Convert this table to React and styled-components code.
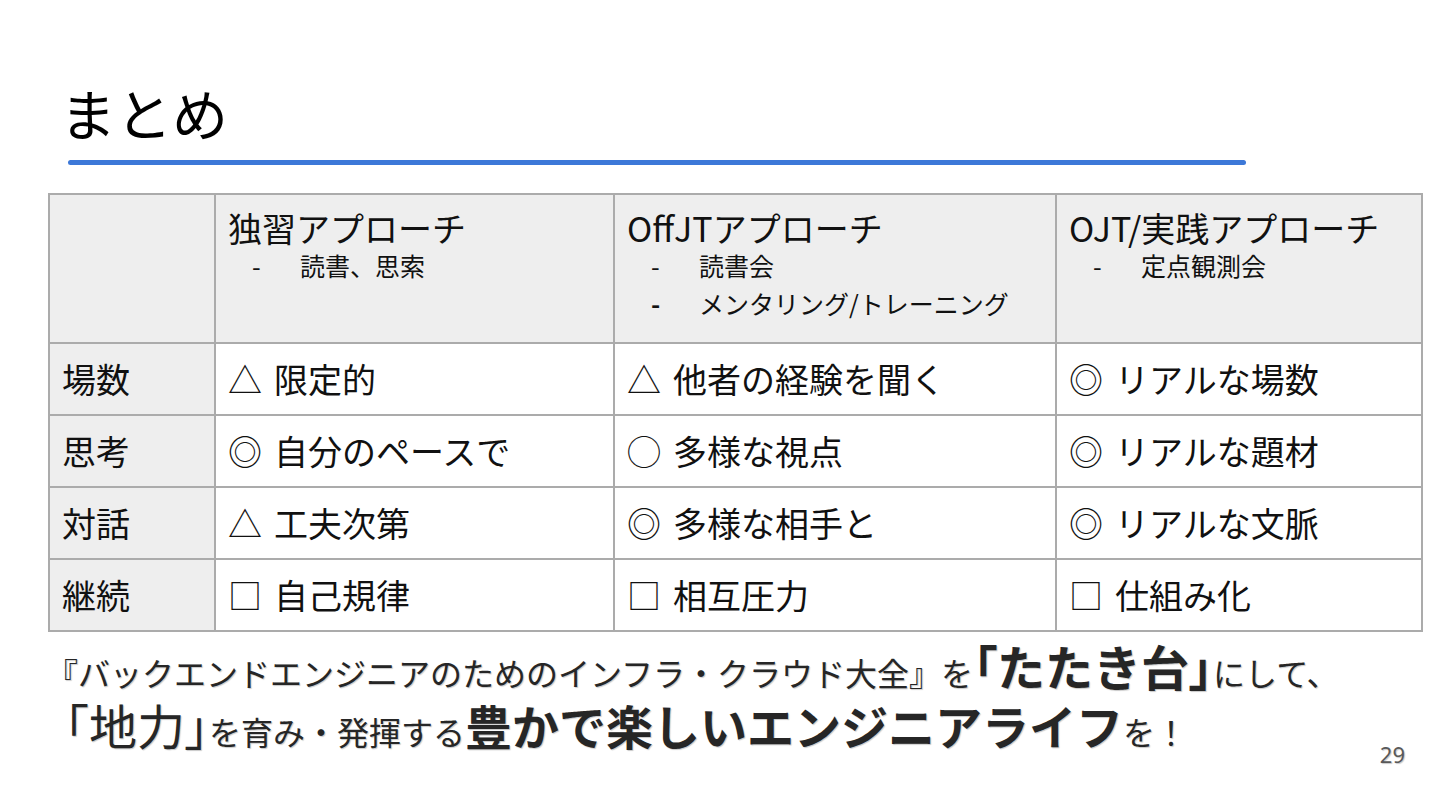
import React from "react"
import styled, { createGlobalStyle } from "styled-components"

const GlobalStyle = createGlobalStyle`
  html, body {
    margin: 0;
    padding: 0;
    background: #ffffff;
  }
  body {
    font-family: "Noto Sans CJK JP", "Noto Sans", sans-serif;
    color: #1f1f1f;
  }
`

const Slide = styled.div`
  width: 1440px;
  height: 810px;
  box-sizing: border-box;
  padding: 82px 19px 0 48px;
  overflow: hidden;
`

const Title = styled.h1`
  margin: 0 0 0 12px;
  font-size: 56px;
  line-height: 60px;
  font-weight: 400;
  color: #000;
`

const Rule = styled.div`
  width: 1178px;
  height: 5px;
  margin: 18px 0 0 20px;
  border-radius: 3px;
  background: #3c78d8;
`

const Table = styled.table`
  margin-top: 28px;
  width: 1373px;
  border-collapse: collapse;
  table-layout: fixed;
`

const Cell = styled.td`
  border: 2px solid #ababab;
  padding: 0 12px;
  background: ${(p) => (p.$shaded ? "#eeeeee" : "#ffffff")};
  font-size: 34px;
  line-height: 40px;
  color: #111;
  vertical-align: ${(p) => (p.$head ? "top" : "middle")};
  height: ${(p) => (p.$head ? "149px" : "72px")};
  padding-top: ${(p) => (p.$head ? "13px" : "0")};
  white-space: nowrap;
  box-sizing: border-box;
`

const HeadTitle = styled.div`
  font-size: 34px;
  line-height: 40px;
`

const SubList = styled.ul`
  list-style: none;
  margin: -2px 0 0 24px;
  padding: 0;
`

const SubItem = styled.li`
  display: flex;
  font-size: 25px;
  line-height: 38px;
`

const Dash = styled.span`
  width: 48px;
  flex: none;
  font-weight: ${(p) => (p.$bold ? 700 : 400)};
`

const Mark = styled.span`
  display: inline-block;
  margin-right: 12px;
`

const Message = styled.div`
  margin-top: 6px;
  display: flex;
  justify-content: space-between;
  align-items: flex-end;
  color: #262626;
  text-shadow: 1px 1px 1px rgba(0, 0, 0, 0.22);
`

const Line = styled.div`
  height: ${(p) => p.$h}px;
  line-height: ${(p) => p.$h}px;
  margin-left: ${(p) => p.$shift || 0}px;
  white-space: nowrap;
`

const Text = styled.span`
  font-size: ${(p) => p.$size}px;
  font-weight: ${(p) => (p.$bold ? 700 : 400)};
`

// 括弧だけ詰める
const Bracket = styled.span`
  font-feature-settings: "palt";
`

const PageNo = styled.div`
  font-family: "Noto Sans", sans-serif;
  font-size: 22px;
  color: #595959;
  margin-bottom: -13px;
  margin-right: 16px;
`

const columns = [
  { title: "独習アプローチ", items: [{ text: "読書、思索" }] },
  {
    title: "OffJTアプローチ",
    items: [{ text: "読書会" }, { text: "メンタリング/トレーニング", bold: true }],
  },
  { title: "OJT/実践アプローチ", items: [{ text: "定点観測会" }] },
]

const rows = [
  { label: "場数", cells: [["△", "限定的"], ["△", "他者の経験を聞く"], ["◎", "リアルな場数"]] },
  { label: "思考", cells: [["◎", "自分のペースで"], ["◯", "多様な視点"], ["◎", "リアルな題材"]] },
  { label: "対話", cells: [["△", "工夫次第"], ["◎", "多様な相手と"], ["◎", "リアルな文脈"]] },
  { label: "継続", cells: [["□", "自己規律"], ["□", "相互圧力"], ["□", "仕組み化"]] },
]

function App() {
  return (
    <>
      <GlobalStyle />
      <Slide>
        <Title>まとめ</Title>
        <Rule />

        {/* 比較表 */}
        <Table>
          <colgroup>
            <col style={{ width: 166 }} />
            <col style={{ width: 399 }} />
            <col style={{ width: 442 }} />
            <col style={{ width: 366 }} />
          </colgroup>
          <tbody>
            <tr>
              <Cell $head $shaded />
              {columns.map((col) => (
                <Cell $head $shaded key={col.title}>
                  <HeadTitle>{col.title}</HeadTitle>
                  <SubList>
                    {col.items.map((item) => (
                      <SubItem key={item.text}>
                        <Dash $bold={item.bold}>-</Dash>
                        {item.text}
                      </SubItem>
                    ))}
                  </SubList>
                </Cell>
              ))}
            </tr>
            {rows.map((row) => (
              <tr key={row.label}>
                <Cell $shaded>{row.label}</Cell>
                {row.cells.map(([mark, text]) => (
                  <Cell key={text}>
                    <Mark>{mark}</Mark>
                    {text}
                  </Cell>
                ))}
              </tr>
            ))}
          </tbody>
        </Table>

        {/* メッセージ */}
        <Message>
          <div>
            <Line $h={54} $shift={-2}>
              <Text $size={32}>『バックエンドエンジニアのためのインフラ・クラウド大全』を</Text>
              <Text $size={48} $bold>
                <Bracket>「</Bracket>たたき台<Bracket>」</Bracket>
              </Text>
              <Text $size={32}>にして、</Text>
            </Line>
            <Line $h={64} $shift={-7}>
              <Text $size={48}>
                「地力<Bracket>」</Bracket>
              </Text>
              <Text $size={32}>を育み・発揮する</Text>
              <Text $size={47} $bold>豊かで楽しいエンジニアライフ</Text>
              <Text $size={32}>を！</Text>
            </Line>
          </div>
          <PageNo>29</PageNo>
        </Message>
      </Slide>
    </>
  )
}

export default App
